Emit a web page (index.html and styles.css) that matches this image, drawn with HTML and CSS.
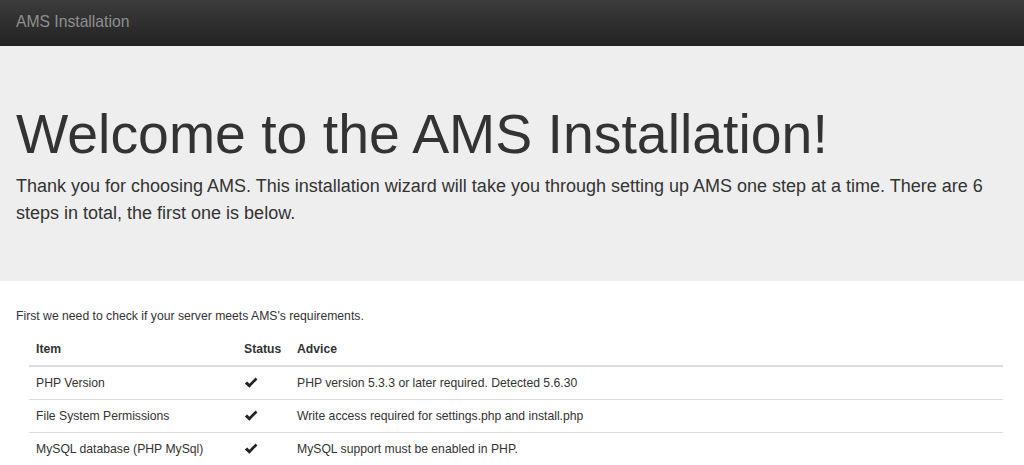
FILE: index.html
```html
<!DOCTYPE html>
<html lang="en">
<head>
<meta charset="utf-8">
<title>AMS Installation</title>
<link rel="stylesheet" href="styles.css">
</head>
<body>
<nav class="navbar">
  <span class="brand">AMS Installation</span>
</nav>
<header class="jumbotron">
  <h1 class="title">Welcome to the AMS Installation!</h1>
  <p class="lead">Thank you for choosing AMS. This installation wizard will take you through setting up AMS one step at a time. There are 6 steps in total, the first one is below.</p>
</header>
<main class="content">
  <p class="intro">First we need to check if your server meets AMS's requirements.</p>
  <div class="table-wrap">
    <table class="req-table">
      <thead>
        <tr><th class="col-item">Item</th><th class="col-status">Status</th><th>Advice</th></tr>
      </thead>
      <tbody>
        <tr>
          <td>PHP Version</td>
          <td><svg class="check" viewBox="0 0 14 12" width="14" height="12"><path d="M0.8 6.6 L3.2 4.4 L5.4 6.8 L11.6 0.6 L13.4 2.4 L5.4 10.8 Z" fill="#222"/></svg></td>
          <td>PHP version 5.3.3 or later required. Detected 5.6.30</td>
        </tr>
        <tr>
          <td>File System Permissions</td>
          <td><svg class="check" viewBox="0 0 14 12" width="14" height="12"><path d="M0.8 6.6 L3.2 4.4 L5.4 6.8 L11.6 0.6 L13.4 2.4 L5.4 10.8 Z" fill="#222"/></svg></td>
          <td>Write access required for settings.php and install.php</td>
        </tr>
        <tr>
          <td>MySQL database (PHP MySql)</td>
          <td><svg class="check" viewBox="0 0 14 12" width="14" height="12"><path d="M0.8 6.6 L3.2 4.4 L5.4 6.8 L11.6 0.6 L13.4 2.4 L5.4 10.8 Z" fill="#222"/></svg></td>
          <td>MySQL support must be enabled in PHP.</td>
        </tr>
      </tbody>
    </table>
  </div>
</main>
</body>
</html>
```

FILE: styles.css
```css
* { box-sizing: border-box; }
html, body {
  margin: 0;
  padding: 0;
  background: #fff;
  font-family: "Liberation Sans", Arial, sans-serif;
  color: #333;
}
.navbar {
  height: 46px;
  background: linear-gradient(to bottom, #3c3c3c 0%, #222 100%);
  display: flex;
  align-items: center;
  padding: 0 16px;
}
.brand {
  font-size: 15.7px;
  color: #8f8f8f;
  line-height: 20px;
  margin-top: -3px;
}
.jumbotron {
  background: #eee;
  padding: 58px 16px 54px 16px;
}
.title {
  margin: 0;
  font-size: 55.4px;
  font-weight: normal;
  line-height: 60px;
  color: #333;
}
.lead {
  margin: 9px 0 0 0;
  font-size: 18px;
  line-height: 27px;
  color: #333;
}
.content {
  padding: 26px 21px 0 16px;
}
.intro {
  margin: 1px 0 9px 0;
  font-size: 12.2px;
  line-height: 16px;
}
.table-wrap {
  padding-left: 13px;
}
.req-table {
  width: 100%;
  border-collapse: collapse;
  font-size: 12.2px;
  line-height: 16px;
}
.req-table th, .req-table td {
  text-align: left;
  padding: 8px 7px;
  vertical-align: top;
}
.req-table th {
  font-weight: bold;
  border-bottom: 2px solid #ddd;
}
.req-table td {
  border-bottom: 1px solid #ddd;
}
.col-item { width: 208px; }
.col-status { width: 53px; }
.check {
  display: block;
  margin-top: 2px;
}
```
